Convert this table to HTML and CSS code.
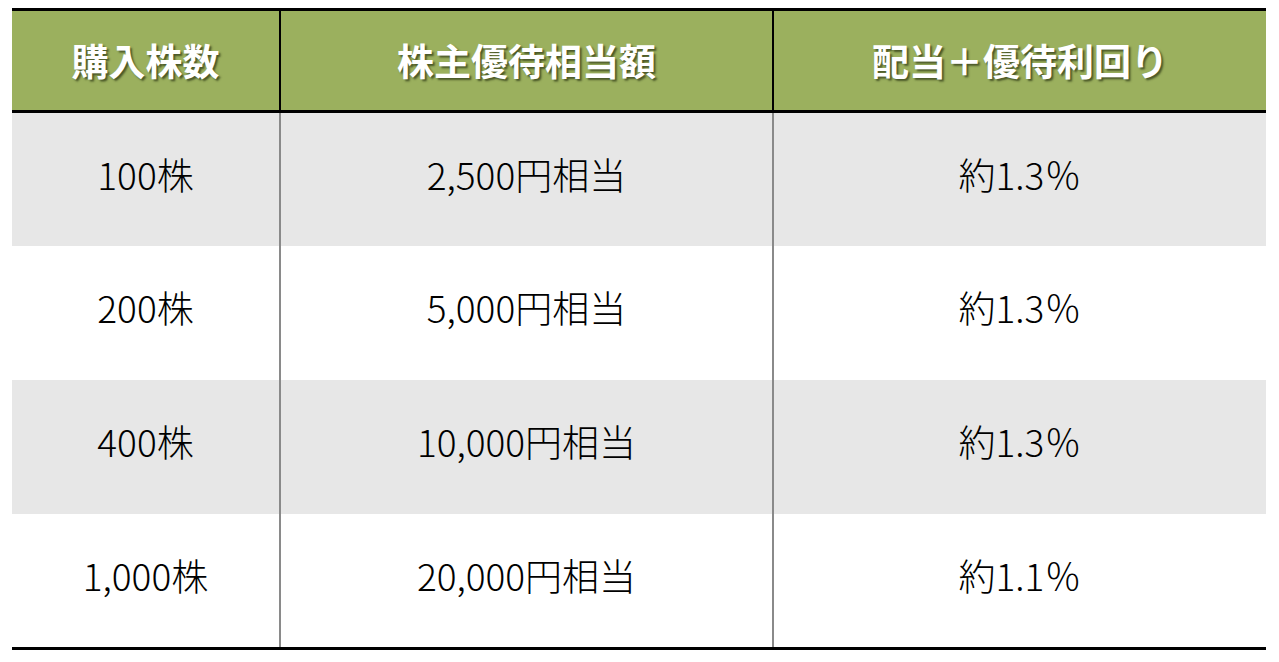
FILE: index.html
```html
<!DOCTYPE html>
<html lang="ja">
<head>
<meta charset="utf-8">
<link rel="stylesheet" href="styles.css">
</head>
<body>
<div class="page">
  <div class="table">
    <div class="cell head">購入株数</div>
    <div class="cell head div">株主優待相当額</div>
    <div class="cell head div">配当＋優待利回り</div>

    <div class="cell odd">100株</div>
    <div class="cell odd div">2,500円相当</div>
    <div class="cell odd div">約1.3％</div>

    <div class="cell even">200株</div>
    <div class="cell even div">5,000円相当</div>
    <div class="cell even div">約1.3％</div>

    <div class="cell odd">400株</div>
    <div class="cell odd div">10,000円相当</div>
    <div class="cell odd div">約1.3％</div>

    <div class="cell even">1,000株</div>
    <div class="cell even div">20,000円相当</div>
    <div class="cell even div">約1.1％</div>
  </div>
</div>
</body>
</html>
```

FILE: styles.css
```css
html, body {
  margin: 0;
  padding: 0;
  background: #ffffff;
}

.page {
  padding: 8px 0 0 12px;
}

.table {
  width: 1254px;
  display: grid;
  grid-template-columns: 267px 493px 494px;
  grid-template-rows: 102px 133px 134px 134px 133px;
  border-top: 3px solid #000;
  border-bottom: 3px solid #000;
  font-family: "Noto Sans CJK JP", "Noto Sans", sans-serif;
}

.cell {
  display: flex;
  align-items: center;
  justify-content: center;
  box-sizing: border-box;
  font-size: 37px;
  font-weight: 300;
  color: #000;
  padding-bottom: 12px;
}

.cell.div {
  border-left: 2px solid #8a8a8a;
}

.head {
  background: #9bb05e;
  color: #fff;
  font-weight: bold;
  font-size: 37px;
  border-bottom: 3px solid #000;
  padding-bottom: 2px;
  text-shadow: 2px 2px 2px rgba(30, 40, 10, 0.65);
}

.head.div {
  border-left-color: #000;
}

.odd {
  background: #e7e7e7;
}

.even {
  background: #ffffff;
}
```
